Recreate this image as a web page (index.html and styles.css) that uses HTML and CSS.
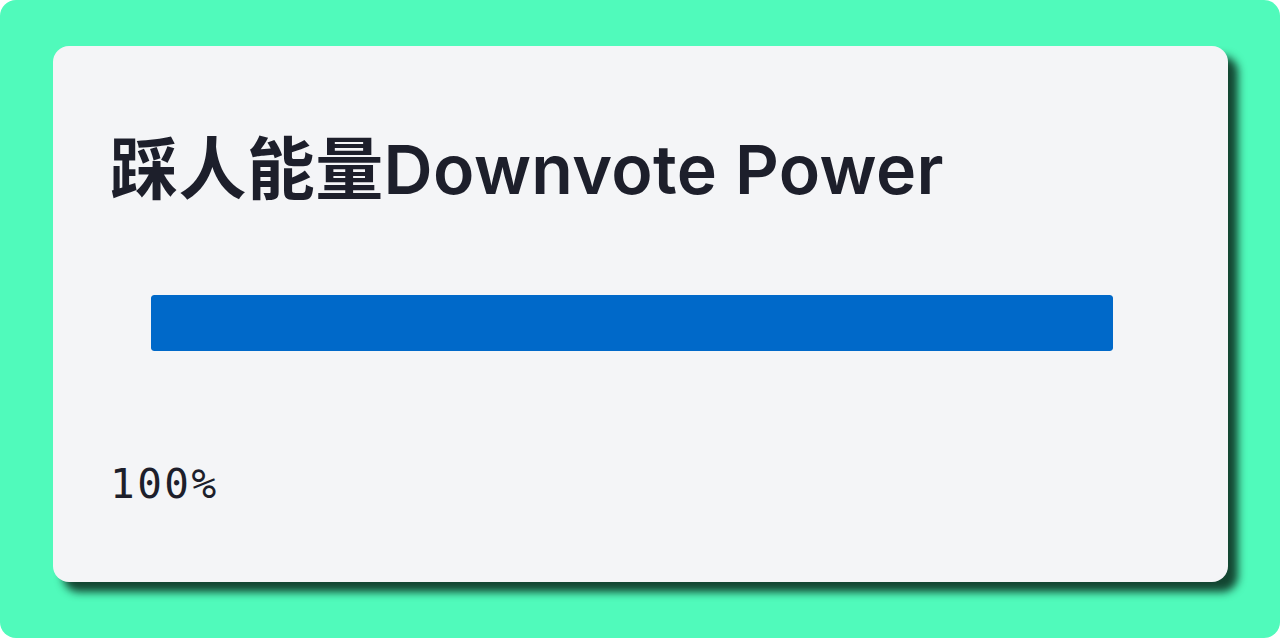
FILE: index.html
```html
<!DOCTYPE html>
<html lang="zh">
<head>
<meta charset="utf-8">
<link rel="stylesheet" href="styles.css">
</head>
<body>
<div class="frame">
  <div class="card">
    <h1 class="title">踩人能量Downvote Power</h1>
    <div class="bar-track">
      <div class="bar-fill" style="width:100%"></div>
    </div>
    <div class="value">100%</div>
  </div>
</div>
</body>
</html>
```
FILE: styles.css
```css
html, body {
  margin: 0;
  padding: 0;
  background: #ffffff;
  width: 1280px;
  height: 638px;
  overflow: hidden;
}
.frame {
  box-sizing: border-box;
  width: 1280px;
  height: 638px;
  background: #50fabb;
  border-radius: 16px;
  padding: 46px 52px 56px 53px;
  display: flex;
}
.card {
  flex: 1;
  background: #f4f5f7;
  border-radius: 16px;
  box-shadow: 10px 10px 8px rgba(16, 60, 42, 0.95);
  padding: 0 56px 0 57px;
  display: flex;
  flex-direction: column;
}
.title {
  margin: 83px 0 0 0;
  font-family: Inter, "Noto Sans CJK SC", sans-serif;
  font-weight: 600;
  font-size: 68px;
  letter-spacing: 0.4px;
  line-height: 80px;
  color: #1d1f2b;
  white-space: nowrap;
}
.bar-track {
  margin: 86px 59px 0 41px;
  height: 56px;
  border-radius: 3px;
  background: #e5e7eb;
  overflow: hidden;
}
.bar-fill {
  height: 100%;
  background: #0069c9;
  border-radius: 3px;
}
.value {
  margin-top: 107px;
  font-family: "DejaVu Sans Mono", monospace;
  font-size: 41px;
  letter-spacing: 2.5px;
  line-height: 52px;
  color: #1d1f2b;
}
```
